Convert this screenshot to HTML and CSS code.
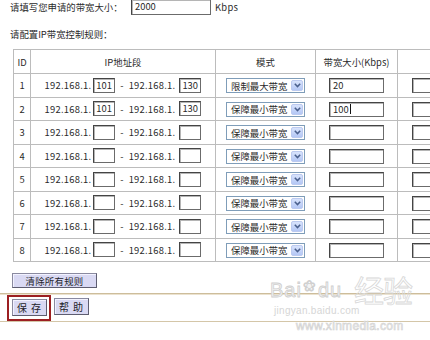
FILE: index.html
```html
<!DOCTYPE html>
<html>
<head>
<meta charset="utf-8">
<link rel="stylesheet" href="styles.css">
</head>
<body>
<div class="page">
  <div class="top">
    <span class="top-label">请填写您申请的带宽大小：</span>
    <span class="box total">2000</span>
    <span class="kbps">Kbps</span>
  </div>
  <div class="caption">请配置IP带宽控制规则：</div>
  <div class="table-wrap">
  <table class="rules">
    <colgroup>
      <col class="c-id"><col class="c-ip"><col class="c-mode"><col class="c-bw"><col class="c-extra">
    </colgroup>
    <thead>
      <tr><th>ID</th><th>IP地址段</th><th>模式</th><th>带宽大小(Kbps)</th><th></th></tr>
    </thead>
    <tbody>
      <tr>
        <td>1</td>
        <td><div class="ip"><span class="pre">192.168.1.</span><span class="box oct">101</span><span class="dash">-</span><span class="pre">192.168.1.</span><span class="box oct">130</span></div></td>
        <td><div class="sel"><span>限制最大带宽</span><span class="arrow"><svg width="7" height="5" viewBox="0 0 7 5"><path d="M0.8 0.8 L3.5 3.6 L6.2 0.8" fill="none" stroke="#4a5f8c" stroke-width="1.5"/></svg></span></div></td>
        <td><span class="box bw">20</span></td>
        <td><span class="box bw"></span></td>
      </tr>
      <tr>
        <td>2</td>
        <td><div class="ip"><span class="pre">192.168.1.</span><span class="box oct">101</span><span class="dash">-</span><span class="pre">192.168.1.</span><span class="box oct">130</span></div></td>
        <td><div class="sel"><span>保障最小带宽</span><span class="arrow"><svg width="7" height="5" viewBox="0 0 7 5"><path d="M0.8 0.8 L3.5 3.6 L6.2 0.8" fill="none" stroke="#4a5f8c" stroke-width="1.5"/></svg></span></div></td>
        <td><span class="box bw">100<span class="caret"></span></span></td>
        <td><span class="box bw"></span></td>
      </tr>
      <tr>
        <td>3</td>
        <td><div class="ip"><span class="pre">192.168.1.</span><span class="box oct"></span><span class="dash">-</span><span class="pre">192.168.1.</span><span class="box oct"></span></div></td>
        <td><div class="sel"><span>保障最小带宽</span><span class="arrow"><svg width="7" height="5" viewBox="0 0 7 5"><path d="M0.8 0.8 L3.5 3.6 L6.2 0.8" fill="none" stroke="#4a5f8c" stroke-width="1.5"/></svg></span></div></td>
        <td><span class="box bw"></span></td>
        <td><span class="box bw"></span></td>
      </tr>
      <tr>
        <td>4</td>
        <td><div class="ip"><span class="pre">192.168.1.</span><span class="box oct"></span><span class="dash">-</span><span class="pre">192.168.1.</span><span class="box oct"></span></div></td>
        <td><div class="sel"><span>保障最小带宽</span><span class="arrow"><svg width="7" height="5" viewBox="0 0 7 5"><path d="M0.8 0.8 L3.5 3.6 L6.2 0.8" fill="none" stroke="#4a5f8c" stroke-width="1.5"/></svg></span></div></td>
        <td><span class="box bw"></span></td>
        <td><span class="box bw"></span></td>
      </tr>
      <tr>
        <td>5</td>
        <td><div class="ip"><span class="pre">192.168.1.</span><span class="box oct"></span><span class="dash">-</span><span class="pre">192.168.1.</span><span class="box oct"></span></div></td>
        <td><div class="sel"><span>保障最小带宽</span><span class="arrow"><svg width="7" height="5" viewBox="0 0 7 5"><path d="M0.8 0.8 L3.5 3.6 L6.2 0.8" fill="none" stroke="#4a5f8c" stroke-width="1.5"/></svg></span></div></td>
        <td><span class="box bw"></span></td>
        <td><span class="box bw"></span></td>
      </tr>
      <tr>
        <td>6</td>
        <td><div class="ip"><span class="pre">192.168.1.</span><span class="box oct"></span><span class="dash">-</span><span class="pre">192.168.1.</span><span class="box oct"></span></div></td>
        <td><div class="sel"><span>保障最小带宽</span><span class="arrow"><svg width="7" height="5" viewBox="0 0 7 5"><path d="M0.8 0.8 L3.5 3.6 L6.2 0.8" fill="none" stroke="#4a5f8c" stroke-width="1.5"/></svg></span></div></td>
        <td><span class="box bw"></span></td>
        <td><span class="box bw"></span></td>
      </tr>
      <tr>
        <td>7</td>
        <td><div class="ip"><span class="pre">192.168.1.</span><span class="box oct"></span><span class="dash">-</span><span class="pre">192.168.1.</span><span class="box oct"></span></div></td>
        <td><div class="sel"><span>保障最小带宽</span><span class="arrow"><svg width="7" height="5" viewBox="0 0 7 5"><path d="M0.8 0.8 L3.5 3.6 L6.2 0.8" fill="none" stroke="#4a5f8c" stroke-width="1.5"/></svg></span></div></td>
        <td><span class="box bw"></span></td>
        <td><span class="box bw"></span></td>
      </tr>
      <tr>
        <td>8</td>
        <td><div class="ip"><span class="pre">192.168.1.</span><span class="box oct"></span><span class="dash">-</span><span class="pre">192.168.1.</span><span class="box oct"></span></div></td>
        <td><div class="sel"><span>保障最小带宽</span><span class="arrow"><svg width="7" height="5" viewBox="0 0 7 5"><path d="M0.8 0.8 L3.5 3.6 L6.2 0.8" fill="none" stroke="#4a5f8c" stroke-width="1.5"/></svg></span></div></td>
        <td><span class="box bw"></span></td>
        <td><span class="box bw"></span></td>
      </tr>
    </tbody>
  </table>
  </div>
  <div class="clear-row"><span class="btn btn-clear">清除所有规则</span></div>
</div>
<div class="footer">
  <span class="focus"><span class="btn btn-small">保 存</span></span>
  <span class="btn btn-small">帮 助</span>
</div>
<div class="watermark">
  <div class="wm-baidu">Bai<span class="wm-paw">❀</span>du</div>
  <div class="wm-jy">经验</div>
  <div class="wm-url">jingyan.baidu.com</div>
  <div class="wm-xin">www.xinmedia.com</div>
</div>
</body>
</html>
```

FILE: styles.css
```css
* { box-sizing: border-box; }
html, body {
  margin: 0;
  padding: 0;
  background: #fff;
}
body {
  width: 430px;
  height: 340px;
  overflow: hidden;
  position: relative;
  font-family: "Noto Sans CJK SC", "Noto Sans", sans-serif;
  font-size: 9.4px;
  color: #2a2a2a;
}
.page {
  padding-left: 10px;
}
.top {
  display: flex;
  align-items: center;
  height: 16px;
  margin-top: -1px;
}
.top-label {
  width: 121px;
  white-space: nowrap;
}
.box {
  display: inline-flex;
  align-items: center;
  background: #fff;
  border: 1px solid #6b6b6b;
  border-top-color: #444;
  border-left-color: #444;
  box-shadow: inset 1px 1px 0 #b5b5b5;
  padding-left: 3px;
  line-height: 1;
  white-space: nowrap;
}
.total {
  width: 80px;
  height: 16px;
}
.kbps {
  margin-left: 4px;
  letter-spacing: 0.3px;
}
.caption {
  margin-top: 13px;
  height: 12px;
  line-height: 12px;
}
.table-wrap {
  margin-top: 9px;
  width: 420px;
  overflow: hidden;
}
.rules {
  margin-left: 3px;
  border-collapse: collapse;
  table-layout: fixed;
  width: 467px;
}
.c-id { width: 17px; }
.c-ip { width: 185px; }
.c-mode { width: 100px; }
.c-bw { width: 82px; }
.c-extra { width: 83px; }
.rules th, .rules td {
  border: 1px solid #bcbcbc;
  padding: 0;
  text-align: center;
  vertical-align: middle;
  font-weight: normal;
  white-space: nowrap;
}
.rules thead tr { height: 24px; }
.rules tbody tr { height: 23.5px; }
.ip {
  display: flex;
  align-items: center;
  justify-content: center;
}
.pre {
  letter-spacing: 0.25px;
}
.oct {
  width: 22px;
  height: 15px;
  margin-left: 2px;
  padding-left: 2px;
}
.dash {
  margin: 0 5px 0 5px;
}
.oct + .dash + .pre + .oct {
  margin-left: 4px;
}
.sel {
  display: inline-flex;
  align-items: center;
  justify-content: space-between;
  width: 79px;
  height: 15px;
  border: 1px solid #7f9db9;
  background: #fff;
  padding: 0 1px 0 4px;
  vertical-align: middle;
}
.arrow {
  display: flex;
  align-items: center;
  justify-content: center;
  width: 12px;
  height: 11px;
  border: 1px solid #bccaf0;
  border-radius: 2px;
  background: linear-gradient(#d8e3fc, #b4c7f5);
}
.bw {
  width: 55px;
  height: 15px;
  vertical-align: middle;
}
.caret {
  display: inline-block;
  width: 1px;
  height: 10px;
  background: #111;
  margin-left: 1px;
}
.clear-row {
  margin-top: 11px;
  height: 15px;
  display: flex;
}
.btn {
  display: inline-flex;
  align-items: center;
  justify-content: center;
  background: #d9d9f3;
  border: 1px solid #5d5d70;
  border-top-color: #8a8aa0;
  border-left-color: #8a8aa0;
  box-shadow: inset 1px 1px 0 #f2f2ff;
  color: #1e1e2a;
  white-space: nowrap;
}
.btn-clear {
  width: 85px;
  height: 15px;
  margin-left: 2px;
  letter-spacing: 0.3px;
}
.footer {
  margin-top: 5px;
  height: 29px;
  border-top: 1px solid #cdbd9b;
  box-shadow: inset 0 1px 0 #ebe2cf;
  border-bottom: 1px solid #d4c6a8;
  display: flex;
  align-items: flex-start;
  padding: 1px 0 0 7px;
  gap: 3px;
}
.focus {
  display: inline-flex;
  border: 2px solid #9c1f22;
  padding: 2px 2px 3px 3px;
}
.btn-small {
  width: 35px;
  height: 17px;
  font-size: 10px;
  letter-spacing: 1px;
}
.footer > .btn-small {
  margin-top: 3px;
}
.watermark {
  position: absolute;
  left: 268px;
  top: 262px;
  width: 162px;
  height: 78px;
  pointer-events: none;
  color: #e6e6e6;
}
.wm-baidu {
  position: absolute;
  left: 2px;
  top: 18px;
  line-height: 1;
  font-family: "Liberation Sans", sans-serif;
  font-size: 20px;
  color: #f4f4f4;
  -webkit-text-stroke: 0.8px #cfcfcf;
  letter-spacing: 1px;
}
.wm-paw {
  font-size: 15px;
  margin: 0 1px;
  position: relative;
  top: -6px;
}
.wm-jy {
  position: absolute;
  left: 86px;
  top: 12px;
  line-height: 1;
  font-size: 30px;
  color: transparent;
  -webkit-text-stroke: 0.8px #d8d8d8;
  letter-spacing: -1px;
}
.wm-url {
  position: absolute;
  left: 6px;
  top: 44px;
  line-height: 1;
  font-family: "Liberation Sans", sans-serif;
  font-size: 10px;
  color: #d6d6d6;
  letter-spacing: 0.3px;
}
.wm-xin {
  position: absolute;
  left: 28px;
  top: 58px;
  line-height: 1;
  font-family: "Liberation Sans", sans-serif;
  font-size: 12px;
  color: #f2f2f2;
  -webkit-text-stroke: 0.6px #d2d2d2;
  letter-spacing: 0.3px;
}
```
